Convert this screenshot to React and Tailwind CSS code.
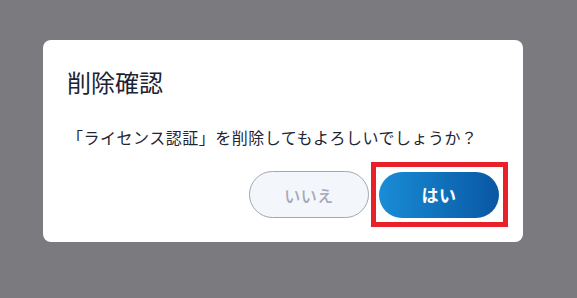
export default function App() {
  return (
    <div
      className="w-[577px] h-[298px] bg-[#7b7b7f] pl-[43px] pt-[40px] overflow-hidden"
      style={{ fontFamily: '"Noto Sans CJK JP", "Noto Sans", sans-serif' }}
    >
      <div className="w-[480px] h-[202px] bg-white rounded-lg px-6 pt-[26px] pb-6 flex flex-col">
        <h2 className="text-[24px] leading-8 text-[#1c2333] font-normal">削除確認</h2>
        <p className="mt-[27px] text-[16px] leading-6 tracking-[0.5px] text-[#1f2533]">
          「ライセンス認証」を削除してもよろしいでしょうか？
        </p>
        <div className="mt-auto flex justify-end gap-[10px]">
          <button className="w-[120px] h-[47px] rounded-full border border-[#a3a7b3] bg-[#f3f6fb] text-[#a4a8b6] text-[16px] font-medium tracking-[0.5px]">
            いいえ
          </button>
          <div className="relative">
            <button className="w-[120px] h-[46px] mt-px rounded-full bg-gradient-to-r from-[#1a8dd6] to-[#0a57a3] text-white text-[17px] font-bold tracking-[0.5px]">
              はい
            </button>
            <span className="absolute left-[-8px] right-[-9px] top-[-9px] bottom-[-9px] border-[5px] border-[#e8202a] pointer-events-none" />
          </div>
        </div>
      </div>
    </div>
  );
}
